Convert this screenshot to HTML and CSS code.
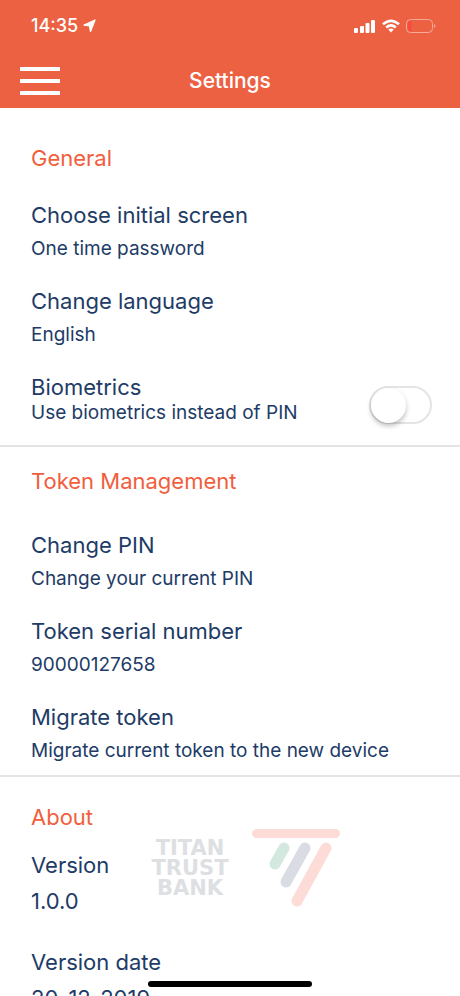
FILE: index.html
```html
<!DOCTYPE html>
<html lang="en">
<head>
<meta charset="utf-8">
<meta name="viewport" content="width=device-width, initial-scale=1">
<title>Settings</title>
<link rel="stylesheet" href="styles.css">
</head>
<body>
<div class="screen">
  <header class="header">
    <div class="status">
      <span class="time">14:35</span>
      <svg class="location" width="14" height="14" viewBox="0 0 14 14" aria-hidden="true"><path d="M13 1 8.500 12.500 7.500 6.800 2 6Z" fill="#fff" stroke="#fff" stroke-width="1.300" stroke-linejoin="round"/></svg>
      <div class="indicators">
        <svg width="22" height="14" viewBox="0 0 22 14" fill="#fff" aria-hidden="true"><rect x="0" y="9" width="4" height="5" rx="1"/><rect x="6" y="7" width="4" height="7" rx="1"/><rect x="11.500" y="4" width="4" height="10" rx="1"/><rect x="17" y="1" width="4" height="13" rx="1"/></svg>
        <svg width="18" height="14" viewBox="0 0 18 14" fill="none" stroke="#fff" stroke-width="2.600" aria-hidden="true"><path d="M1 5.300Q9-1.700 17 5.300M4.200 8.500Q9 4.300 13.800 8.500"/><path d="M6.300 10.600Q9 8.300 11.700 10.600L9 13.400Z" fill="#fff" stroke="none"/></svg>
        <svg width="30" height="14" viewBox="0 0 30 14" aria-hidden="true"><rect x="0.500" y="0.500" width="26" height="13" rx="4" fill="none" stroke="#f7a999"/><path d="M4 2h1.500v10H4a2 2 0 0 1-2-2V4a2 2 0 0 1 2-2Z" fill="#fc4a3c"/><path d="M28 5q3 2 0 4Z" fill="#f7a999"/></svg>
      </div>
    </div>
    <div class="bar">
      <button class="menu" type="button" aria-label="Menu"><span></span><span></span><span></span></button>
      <h1>Settings</h1>
    </div>
  </header>
  <main>
    <section class="section general">
      <h2>General</h2>
      <div class="list">
        <div class="item"><h3>Choose initial screen</h3><p>One time password</p></div>
        <div class="item"><h3>Change language</h3><p>English</p></div>
        <div class="setting">
          <div><h3><label for="biometrics">Biometrics</label></h3><p>Use biometrics instead of PIN</p></div>
          <input class="switch" id="biometrics" type="checkbox" role="switch">
        </div>
      </div>
    </section>
    <section class="section token">
      <h2>Token Management</h2>
      <div class="list">
        <div class="item"><h3>Change PIN</h3><p>Change your current PIN</p></div>
        <div class="item"><h3>Token serial number</h3><p>90000127658</p></div>
        <div class="item"><h3>Migrate token</h3><p>Migrate current token to the new device</p></div>
      </div>
    </section>
    <section class="section about">
      <h2>About</h2>
      <dl>
        <div class="item"><dt>Version</dt><dd>1.0.0</dd></div>
        <div class="item"><dt>Version date</dt><dd>20-12-2019</dd></div>
      </dl>
    </section>
  </main>
  <div class="brand">
    <div class="wordmark"><span>TITAN</span><span>TRUST</span><span>BANK</span></div>
    <svg width="90" height="80" viewBox="0 0 90 80" fill="none" stroke-linecap="round" aria-hidden="true"><path d="M4.500 5.500H83.500" stroke="#fddcd7" stroke-width="9"/><path d="m32 20-9 16" stroke="#d3e9df" stroke-width="11"/><path d="M53 20 34 54" stroke="#dadce3" stroke-width="11"/><path d="M74 20 45 73" stroke="#fddcd7" stroke-width="11"/></svg>
  </div>
  <div class="home-indicator"></div>
</div>
</body>
</html>
```
FILE: styles.css
```css
* {
  box-sizing: border-box;
  margin: 0;
  padding: 0;
}

body {
  font-family: Inter, Roboto, sans-serif;
  color: #213b66;
  background: #fff;
}

.screen {
  position: relative;
  height: 100vh;
  overflow: hidden;
}

.header {
  color: #fff;
  background: #ec6142;
}

.status {
  display: flex;
  align-items: center;
  padding: 14px 24px 6px 31px;
}

.time {
  font-size: 18px;
  line-height: 24px;
  font-weight: 500;
}

.location {
  margin-left: 4px;
}

.indicators {
  display: flex;
  gap: 6px;
  margin-left: auto;
}

.bar {
  display: grid;
  grid-template-columns: 40px 1fr 40px;
  align-items: center;
  height: 64px;
  padding: 10px 20px 0;
}

.menu {
  display: flex;
  flex-direction: column;
  gap: 8px;
  border: 0;
  background: none;
}

.menu span {
  width: 100%;
  height: 4px;
  background: #fff;
}

h1 {
  font-size: 21px;
  line-height: 28px;
  font-weight: 500;
  text-align: center;
}

h2,
h3,
dt,
dd {
  font-size: 22px;
  line-height: 28px;
  font-weight: 400;
}

h2 {
  color: #f15e3d;
}

p {
  font-size: 19px;
  line-height: 24px;
}

.section {
  padding: 0 28px 0 31px;
}

.section + .section {
  border-top: 2px solid #e2e4e6;
}

.list,
dl,
.item {
  display: flex;
  flex-direction: column;
}

.list {
  gap: 26px;
}

.item {
  gap: 8px;
}

.general {
  padding-top: 36px;
  padding-bottom: 20px;
}

.general .list {
  margin-top: 29px;
}

.token {
  padding-top: 20px;
  padding-bottom: 12px;
}

.token .list {
  margin-top: 36px;
}

.about {
  padding-top: 26px;
}

dl {
  gap: 33px;
  margin-top: 20px;
}

.setting {
  display: flex;
  align-items: center;
  justify-content: space-between;
}

.switch {
  appearance: none;
  width: 63px;
  height: 38px;
  border: 2px solid #e4e4e4;
  border-radius: 19px;
  margin-top: 12px;
  background: #fff;
}

.switch::before {
  content: "";
  display: block;
  width: 35px;
  height: 35px;
  border-radius: 50%;
  background: #fff;
  box-shadow: 0 3px 5px rgb(0 0 0 / 25%);
}

.switch:checked {
  background: #ec6142;
}

.switch:checked::before {
  margin-left: auto;
}

.brand {
  position: absolute;
  left: 140px;
  bottom: 88px;
  display: flex;
  align-items: center;
  gap: 12px;
}

.wordmark {
  display: flex;
  flex-direction: column;
  align-items: center;
  width: 100px;
  font-family: "DejaVu Sans", sans-serif;
  font-size: 21px;
  line-height: 20px;
  font-weight: 700;
  color: #dddfe3;
}

.home-indicator {
  position: absolute;
  left: 50%;
  bottom: 9px;
  width: 164px;
  height: 6px;
  border-radius: 3px;
  background: #000;
  transform: translateX(-50%);
}
```
